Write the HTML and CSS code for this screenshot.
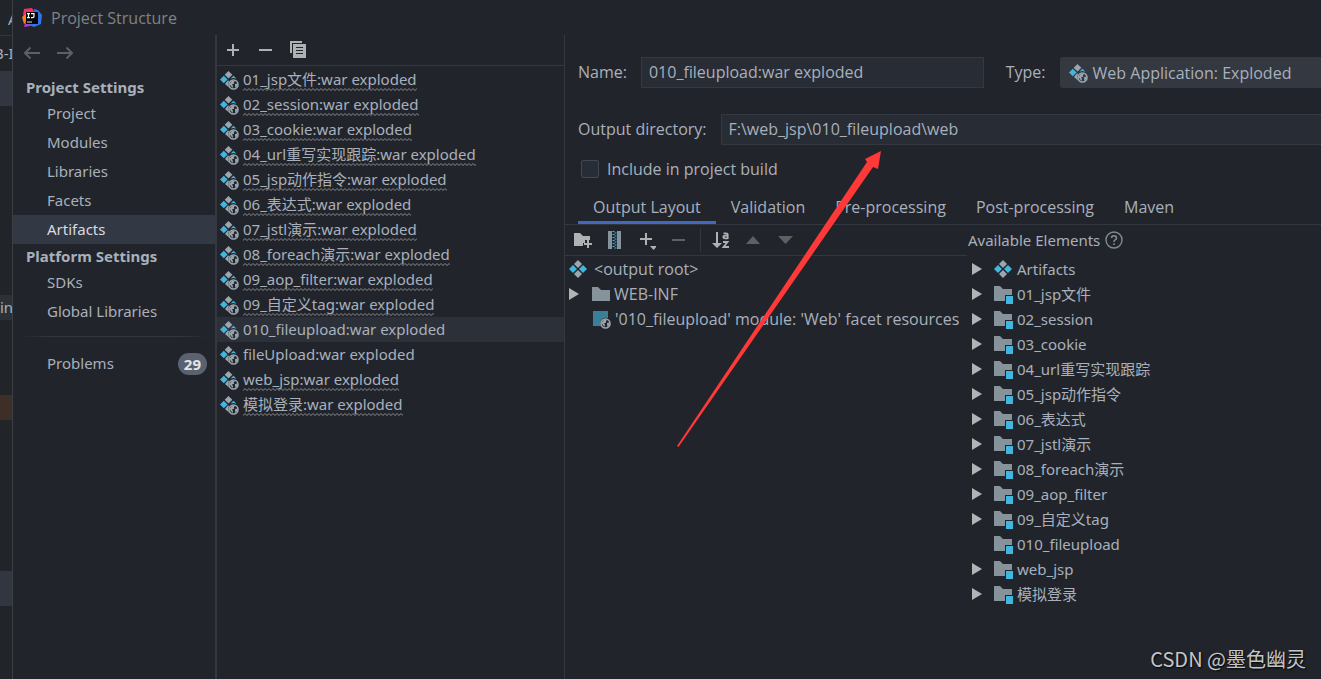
FILE: index.html
```html
<!DOCTYPE html>
<html lang="en">
<head>
<meta charset="utf-8">
<title>Project Structure</title>
<link rel="stylesheet" href="styles.css">
</head>
<body>
<svg class="sprite" aria-hidden="true">
  <symbol id="artifact" viewBox="0 0 18 18">
    <path fill="#9aa7b0" d="M9 0l4 4-4 4-4-4zM9 10l4 4-4 4-4-4z"/>
    <path fill="#40b6e0" d="M4 5l4 4-4 4-4-4zM14 5l4 4-4 4-4-4z"/>
  </symbol>
  <symbol id="web-artifact" viewBox="0 0 19 19">
    <path fill="#9aa7b0" d="M8.500 0l3.800 3.800-3.800 3.800-3.800-3.800z"/>
    <path fill="#40b6e0" d="M3.800 4.700l3.800 3.800-3.800 3.800L0 8.500zM10.500 7.500l3-2.700 3 2.900-2.900-.8z"/>
    <path fill="#9aa7b0" d="M8 9.300l1 1q-1.700 2.600 0 6.200L5 13z"/>
    <circle cx="13.500" cy="13.500" r="4.500" fill="none" stroke="#9aa7b0" stroke-width="1.600"/>
    <path fill="#9aa7b0" d="M9.500 13l2.500-3.500 3 .3-1.200 1.700.4 1.300-2.200.4 1 1.800-.5 2zM15 13l2.500-.5-.6 3-1.600 1.500z"/>
  </symbol>
  <symbol id="folder" viewBox="0 0 18 14">
    <path fill="#87939a" d="M0 0h6l3 3h9v11H0z"/>
  </symbol>
  <symbol id="module" viewBox="0 0 19 18">
    <path fill="#87939a" d="M0 0h6l3 3h9v6h-7v6H0z"/>
    <path fill="#40b6e0" d="M12 10h7v8h-7z"/>
  </symbol>
  <symbol id="facet" viewBox="0 0 19 18">
    <path fill="#3a7f99" d="M1 0h15v7q-7-1-8 5l.6 3H1z"/>
    <circle cx="13.500" cy="12.500" r="4.500" fill="none" stroke="#9aa7b0" stroke-width="1.600"/>
    <path fill="#9aa7b0" d="M9.500 12l2.500-3.500 3 .3-1.200 1.700.4 1.300-2.200.4 1 1.800-.5 2zM15 12l2.500-.5-.6 3-1.600 1.500z"/>
  </symbol>
  <symbol id="twisty" viewBox="0 0 10 12"><path fill="#b3b3b3" d="M0 0l10 6-10 6z"/></symbol>
</svg>

<div class="screen">
  <div class="backdrop" aria-hidden="true">
    <div class="bd-menu">A</div>
    <div class="bd-crumb">B-I</div>
    <div class="bd-selected"></div>
    <div class="bd-space"></div>
    <div class="bd-row">int</div>
    <div class="bd-gap"></div>
    <div class="bd-brown"></div>
    <div class="bd-lower"></div>
    <div class="bd-selected"></div>
  </div>

  <div class="dialog">
    <header class="titlebar">
      <svg class="logo" viewBox="0 0 20 20" width="20" height="20">
        <path fill="#fc2f62" d="M2 1l8-1 3 5-8 6-4-4z"/>
        <path fill="#fc801d" d="M0 9l4-3 2 7-4 3z"/>
        <path fill="#b535d8" d="M4 12l8 5-4 1-6 1z"/>
        <path fill="#3373ea" d="M12 1l4 1 4 5-1 9-7 3-5-2 6-4z"/>
        <path fill="#07070a" d="M4 4h12v12H4z"/>
        <path fill="none" stroke="#fff" stroke-width="1.200" d="M5 5.600h3M6.500 5.600v4M5 9.600h3M9 5.600h3v3q0 1-1.500 1H9"/>
        <path fill="#ddd" d="M5 13.500h5v1H5z"/>
      </svg>
      <h1>Project Structure</h1>
    </header>

    <div class="panes">
      <nav class="nav">
        <div class="history">
          <button type="button" aria-label="Back"><svg width="18" height="14" viewBox="0 0 18 14"><path class="line dim" d="M17 7H2M7.500 1.500L2 7l5.500 5.500"/></svg></button>
          <button type="button" aria-label="Forward"><svg width="18" height="14" viewBox="0 0 18 14"><path class="line dim" d="M1 7h15M10.500 1.500L16 7l-5.500 5.500"/></svg></button>
        </div>
        <h2>Project Settings</h2>
        <a href="#">Project</a>
        <a href="#">Modules</a>
        <a href="#">Libraries</a>
        <a href="#">Facets</a>
        <a href="#" class="current">Artifacts</a>
        <h2>Platform Settings</h2>
        <a href="#">SDKs</a>
        <a href="#">Global Libraries</a>
        <hr>
        <a href="#" class="problems">Problems <span class="badge">29</span></a>
      </nav>

      <section class="artifacts">
        <div class="toolbar">
          <button type="button" aria-label="Add"><svg width="18" height="18" viewBox="0 0 18 18"><path fill="#afb1b3" d="M8 3h2v5h5v2h-5v5H8v-5H3V8h5z"/></svg></button>
          <button type="button" aria-label="Remove"><svg width="18" height="18" viewBox="0 0 18 18"><path fill="#afb1b3" d="M2 8h13v2H2z"/></svg></button>
          <button type="button" aria-label="Copy"><svg width="18" height="18" viewBox="0 0 18 18"><path fill="#afb1b3" d="M0 0h12v2H2v10H0zM3 3h13v14H3zm3 3v1h7V6zm0 3v1h7V9zm0 3v1h7v-1z" fill-rule="evenodd"/></svg></button>
        </div>
        <ul class="rows">
          <li><svg class="i-web"><use href="#web-artifact"/></svg><span class="wavy">01_jsp文件:war exploded</span></li>
          <li><svg class="i-web"><use href="#web-artifact"/></svg><span class="wavy">02_session:war exploded</span></li>
          <li><svg class="i-web"><use href="#web-artifact"/></svg><span class="wavy">03_cookie:war exploded</span></li>
          <li><svg class="i-web"><use href="#web-artifact"/></svg><span class="wavy">04_url重写实现跟踪:war exploded</span></li>
          <li><svg class="i-web"><use href="#web-artifact"/></svg><span class="wavy">05_jsp动作指令:war exploded</span></li>
          <li><svg class="i-web"><use href="#web-artifact"/></svg><span class="wavy">06_表达式:war exploded</span></li>
          <li><svg class="i-web"><use href="#web-artifact"/></svg><span class="wavy">07_jstl演示:war exploded</span></li>
          <li><svg class="i-web"><use href="#web-artifact"/></svg><span class="wavy">08_foreach演示:war exploded</span></li>
          <li><svg class="i-web"><use href="#web-artifact"/></svg><span class="wavy">09_aop_filter:war exploded</span></li>
          <li><svg class="i-web"><use href="#web-artifact"/></svg><span class="wavy">09_自定义tag:war exploded</span></li>
          <li class="selected"><svg class="i-web"><use href="#web-artifact"/></svg><span>010_fileupload:war exploded</span></li>
          <li><svg class="i-web"><use href="#web-artifact"/></svg><span>fileUpload:war exploded</span></li>
          <li><svg class="i-web"><use href="#web-artifact"/></svg><span class="wavy">web_jsp:war exploded</span></li>
          <li><svg class="i-web"><use href="#web-artifact"/></svg><span class="wavy">模拟登录:war exploded</span></li>
        </ul>
      </section>

      <main class="editor">
        <div class="field-row">
          <label for="name">Name:</label>
          <input id="name" class="text name" type="text" value="010_fileupload:war exploded">
          <label for="type">Type:</label>
          <div class="combo">
            <svg class="i-web"><use href="#web-artifact"/></svg>
            <select id="type"><option>Web Application: Exploded</option></select>
          </div>
        </div>
        <div class="field-row">
          <label for="dir">Output directory:</label>
          <input id="dir" class="text dir" type="text" value="F:\web_jsp\010_fileupload\web">
        </div>
        <div class="check-row">
          <input id="build" type="checkbox">
          <label for="build">Include in project build</label>
        </div>

        <div class="tabs" role="tablist">
          <button type="button" role="tab" aria-selected="true">Output Layout</button>
          <button type="button" role="tab">Validation</button>
          <button type="button" role="tab">Pre-processing</button>
          <button type="button" role="tab">Post-processing</button>
          <button type="button" role="tab">Maven</button>
        </div>

        <div class="split">
          <section class="layout">
            <div class="toolbar">
              <button type="button" aria-label="Create directory"><svg width="20" height="18" viewBox="0 0 20 18"><path fill="#afb1b3" d="M2 2h6l3 3h7v4h-5v3h-2v3H2z"/><path fill="#afb1b3" d="M15 9h2v3h3v2h-3v3h-2v-3h-3v-2h3z"/></svg></button>
              <button type="button" aria-label="Create archive"><svg width="18" height="20" viewBox="0 0 18 20"><path fill="#87939a" d="M3 1h4v18H3zM12 1h4v18h-4z"/><path stroke="#40b6e0" stroke-width="2" stroke-dasharray="1 2" d="M8.500 1v18M10.500 2.500V19"/></svg></button>
              <button type="button" aria-label="Add copy of"><svg width="20" height="20" viewBox="0 0 20 20"><path fill="#afb1b3" d="M9 3h2v5h5v2h-5v5H9v-5H4V8h5zM14 16h7l-3.500 4z"/></svg></button>
              <button type="button" aria-label="Remove"><svg width="18" height="18" viewBox="0 0 18 18"><path fill="#5e6062" d="M3 8h13v2H3z"/></svg></button>
              <span class="sep"></span>
              <button type="button" aria-label="Sort"><svg width="20" height="20" viewBox="0 0 20 20"><path fill="#afb1b3" d="M5 2h2v11h4l-5 5-5-5h4z"/><path fill="none" stroke="#afb1b3" stroke-width="1.800" d="M12.500 3.300h2.500q1.700 0 1.700 1.500V9M16.700 5.700h-2.500q-1.800 0-1.800 1.300t1.800 1.300h2.500M12 12h4.500L12.500 17H18"/></svg></button>
              <button type="button" aria-label="Move up"><svg width="18" height="18" viewBox="0 0 18 18"><path fill="#5e6062" d="M2 13l7-8 7 8z"/></svg></button>
              <button type="button" aria-label="Move down"><svg width="18" height="18" viewBox="0 0 18 18"><path fill="#5e6062" d="M3 5h15l-7.500 8z"/></svg></button>
            </div>
            <ul class="rows tree">
              <li class="root"><svg class="i-art"><use href="#artifact"/></svg>&lt;output root&gt;</li>
              <li><svg class="i-twisty"><use href="#twisty"/></svg><svg class="i-folder"><use href="#folder"/></svg>WEB-INF</li>
              <li class="leaf"><svg class="i-mod"><use href="#facet"/></svg>'010_fileupload' module: 'Web' facet resources</li>
            </ul>
          </section>

          <section class="available">
            <h3>Available Elements
              <svg width="18" height="18" viewBox="0 0 18 18"><circle cx="9" cy="9" r="8" fill="none" stroke="#7f8b91" stroke-width="1.400"/><path fill="none" stroke="#7f8b91" stroke-width="1.600" d="M6.500 7q0-2.300 2.500-2.300T11.500 7q0 1.200-1.300 1.900T9 11M9 12.300v1.600"/></svg>
            </h3>
            <ul class="rows tree">
              <li><svg class="i-twisty"><use href="#twisty"/></svg><svg class="i-art"><use href="#artifact"/></svg>Artifacts</li>
              <li><svg class="i-twisty"><use href="#twisty"/></svg><svg class="i-mod"><use href="#module"/></svg>01_jsp文件</li>
              <li><svg class="i-twisty"><use href="#twisty"/></svg><svg class="i-mod"><use href="#module"/></svg>02_session</li>
              <li><svg class="i-twisty"><use href="#twisty"/></svg><svg class="i-mod"><use href="#module"/></svg>03_cookie</li>
              <li><svg class="i-twisty"><use href="#twisty"/></svg><svg class="i-mod"><use href="#module"/></svg>04_url重写实现跟踪</li>
              <li><svg class="i-twisty"><use href="#twisty"/></svg><svg class="i-mod"><use href="#module"/></svg>05_jsp动作指令</li>
              <li><svg class="i-twisty"><use href="#twisty"/></svg><svg class="i-mod"><use href="#module"/></svg>06_表达式</li>
              <li><svg class="i-twisty"><use href="#twisty"/></svg><svg class="i-mod"><use href="#module"/></svg>07_jstl演示</li>
              <li><svg class="i-twisty"><use href="#twisty"/></svg><svg class="i-mod"><use href="#module"/></svg>08_foreach演示</li>
              <li><svg class="i-twisty"><use href="#twisty"/></svg><svg class="i-mod"><use href="#module"/></svg>09_aop_filter</li>
              <li><svg class="i-twisty"><use href="#twisty"/></svg><svg class="i-mod"><use href="#module"/></svg>09_自定义tag</li>
              <li class="leaf"><svg class="i-mod"><use href="#module"/></svg>010_fileupload</li>
              <li><svg class="i-twisty"><use href="#twisty"/></svg><svg class="i-mod"><use href="#module"/></svg>web_jsp</li>
              <li><svg class="i-twisty"><use href="#twisty"/></svg><svg class="i-mod"><use href="#module"/></svg>模拟登录</li>
            </ul>
          </section>
        </div>
      </main>
    </div>
  </div>

  <svg class="pointer" width="206" height="298" viewBox="0 0 206 298" aria-hidden="true"><path fill="#ff3838" d="M204 1l-3 18-5-2L1.500 297 0 296 190 12l-2-3z"/></svg>
  <div class="watermark">CSDN @墨色幽灵</div>
</div>
</body>
</html>
```

FILE: styles.css
```css
* { box-sizing: border-box; }

body {
  margin: 0;
  background: #21252b;
  color: #a9b0bc;
  font: 15px/24px "Noto Sans", "Noto Sans CJK SC", sans-serif;
}

h1, h2, h3, ul { margin: 0; padding: 0; font-size: inherit; font-weight: normal; }
ul { list-style: none; }
a { color: inherit; text-decoration: none; }
svg { display: block; flex: none; }
button, input, select { font: inherit; color: inherit; }
button { border: 0; padding: 0; background: none; }

.sprite { position: absolute; width: 0; height: 0; }

.screen {
  position: relative;
  display: flex;
  min-height: 100vh;
  overflow: hidden;
}

/* sliver of the window behind the dialog */
.backdrop {
  width: 13px;
  flex: none;
  overflow: hidden;
  white-space: nowrap;
  border-right: 1px solid #3c3f43;
  background: #212529;
}
.bd-menu { height: 36px; padding: 7px 0 0 8px; border-bottom: 1px solid #34373c; }
.bd-crumb { height: 35px; padding-top: 5px; text-indent: -6px; }
.bd-selected { height: 35px; background: #313641; }
.bd-space { height: 189px; }
.bd-row { height: 25px; background: #2c3138; }
.bd-gap { height: 75px; }
.bd-brown { height: 25px; background: #3d2f27; }
.bd-lower { height: 151px; }

.dialog { flex: 1; min-width: 0; display: flex; flex-direction: column; }

.titlebar {
  display: flex;
  align-items: center;
  gap: 9px;
  height: 35px;
  padding-left: 9px;
  color: #808285;
}

.titlebar, .field-row, .check-row, .tabs, .layout { font-family: "Open Sans", "Noto Sans CJK SC", sans-serif; font-size: 16px; }

.panes { flex: 1; display: flex; min-height: 0; }

.nav { width: 204px; flex: none; border-right: 2px solid #33373f; }
.history { display: flex; gap: 15px; padding: 11px 0 15px 10px; }
.line { fill: none; stroke-width: 2; }
.dim { stroke: #5e6062; }
.nav h2 { padding-left: 13px; font-weight: bold; line-height: 24px; }
.nav a { display: block; padding-left: 34px; line-height: 29px; }
.nav .current { background: #323844; color: #d7dae0; }
.nav hr {
  height: 1px;
  margin: 10px 8px 12px;
  border: 0;
  background: linear-gradient(90deg, transparent, #33373f 15%, #33373f 85%, transparent);
}
.nav .problems { display: flex; align-items: center; justify-content: space-between; padding-right: 8px; }
.badge {
  padding: 0 6px;
  border-radius: 11px;
  background: #5a6170;
  color: #e3e5e8;
  font-weight: bold;
  line-height: 22px;
}

.artifacts { width: 348px; flex: none; border-right: 1px solid #33373f; }
.toolbar {
  display: flex;
  align-items: center;
  gap: 15px;
  height: 31px;
  padding-left: 7px;
  border-bottom: 1px solid #33373f;
}
.rows { padding-top: 1px; }
.rows li { display: flex; align-items: center; height: 25px; line-height: 22px; white-space: nowrap; }
.artifacts .rows li { gap: 4px; padding: 0 0 2px 3px; line-height: 24px; }
.artifacts li svg { margin-top: 4px; }
.selected { background: #2c3038; }
.wavy {
  background: url("data:image/svg+xml,%3Csvg xmlns='http://www.w3.org/2000/svg' width='4' height='3'%3E%3Cpath d='M-1 3.500L2 .5l3 3' fill='none' stroke='%2385878a'/%3E%3C/svg%3E") 0 100% repeat-x;
}

.i-web { width: 19px; height: 19px; }
.i-art { width: 18px; height: 18px; }
.i-mod { width: 19px; height: 18px; }
.i-folder { width: 18px; height: 14px; }
.i-twisty { width: 10px; height: 12px; }

.editor { flex: 1; min-width: 0; padding-top: 22px; }
.field-row { display: flex; align-items: center; padding-left: 13px; margin-bottom: 26px; }
.text {
  height: 31px;
  min-width: 0;
  padding: 0 7px 1px;
  border: 1px solid #333841;
  background: #282c34;
}
.field-row label { padding-bottom: 1px; }
.name { flex: 5 1 0; margin: 0 22px 0 14px; }
.dir { flex: 1; margin-left: 14px; border-right: 0; }
.combo { position: relative; flex: 4 1 0; margin-left: 14px; }
.combo svg { position: absolute; left: 9px; top: 7px; }
.combo select {
  display: block;
  width: 100%;
  height: 31px;
  padding: 0 0 0 29px;
  border: 0;
  border-radius: 3px 0 0 3px;
  background: #333841;
  appearance: none;
  text-indent: 4px;
}

.check-row { display: flex; align-items: center; gap: 8px; margin-top: -14px; padding-left: 16px; }
.check-row input {
  width: 18px;
  height: 18px;
  margin: 0;
  border: 1px solid #414855;
  border-radius: 2px;
  background: #282c34;
  appearance: none;
}

.tabs { display: flex; margin-top: 9px; padding-left: 13px; border-bottom: 1px solid #33373f; }
.tabs button { height: 34px; padding: 0 15px; white-space: nowrap; }
.tabs [aria-selected="true"] { box-shadow: inset 0 -3px #4269be; }

.split { display: grid; grid-template-columns: 402fr 354fr; }
.layout .toolbar { gap: 13px; }
.sep { width: 1px; height: 24px; margin-right: -3px; background: #33373f; }
.tree { padding-top: 0; }
.tree li { gap: 4px; padding-left: 4px; }
.tree .i-mod { margin-top: 2px; }
.layout .root { gap: 7px; }
.layout .i-twisty { margin-right: 9px; }
.layout .leaf { padding-left: 27px; }
.available li { padding-left: 5px; }
.available .i-twisty { margin-right: 8px; }
.available .leaf { padding-left: 27px; }
.available .i-art { margin-right: 1px; }
.available h3 { display: flex; align-items: center; gap: 5px; height: 31px; padding: 0 0 2px 1px; }

.pointer { position: absolute; left: 677px; top: 150px; }
.watermark {
  position: absolute;
  right: 15px;
  bottom: 6px;
  color: #c4c6c9;
  font-family: "Noto Sans CJK SC", sans-serif;
  font-size: 20px;
  line-height: 28px;
  text-shadow: 1px 1px 2px #000;
}
```
